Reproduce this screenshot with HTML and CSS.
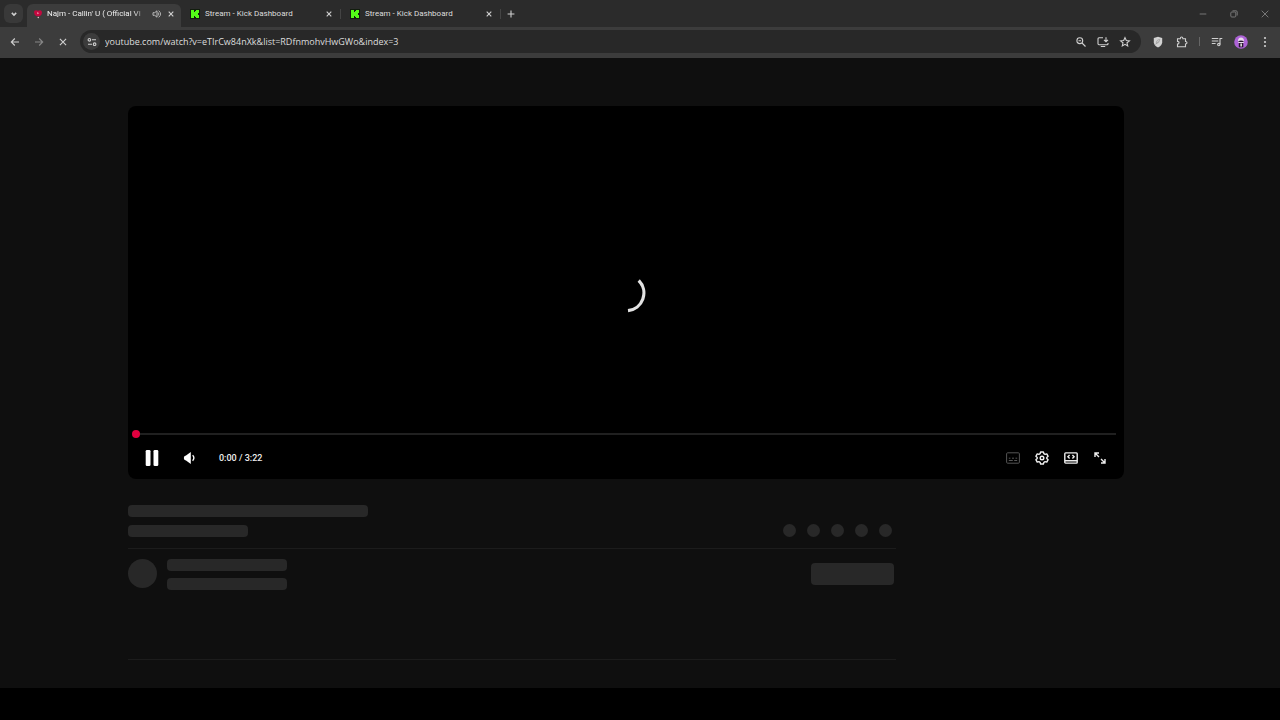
FILE: index.html
```html
<!DOCTYPE html>
<html lang="en">
<head>
<meta charset="utf-8">
<meta name="viewport" content="width=device-width, initial-scale=1">
<title>Najm - Callin' U ( Official Video )</title>
<link rel="stylesheet" href="styles.css">
</head>
<body>
<header class="browser">
  <div class="tabstrip">
    <button class="tab-search" aria-label="Search tabs"><svg width="8" height="8" viewBox="0 0 8 8" class="line bold"><path d="M1.8 2.9 4 5.1 6.2 2.9"/></svg></button>
    <div class="tab active">
      <svg class="favicon" width="10" height="10" viewBox="0 0 10 10"><path d="M1 3.2Q1 1.2 3 1.3L5 1.8 7.3 1.3Q9 1.5 9 3.5 9 6 6.5 7.2H3.7Q1 6 1 3.2Z" fill="#c4083f"/><path d="M4.2 3.1 6.2 4.2 4.2 5.3Z" fill="#e993ac"/><circle cx="5.3" cy="8.5" r=".8" fill="#d8c8cc"/></svg>
      <button class="tab-title">Najm - Callin' U ( Official Vi</button>
      <svg class="audio" width="10" height="10" viewBox="0 0 10 10"><path d="M1 3.7h1.7L5 1.8v6.4L2.7 6.3H1Z" fill="none" stroke="#bbb" stroke-width="1"/><path d="M6.3 3.5Q7.4 5 6.3 6.5M6.7 1.6Q10.5 5 6.7 8.4" fill="none" stroke="#bbb" stroke-width=".9"/></svg>
      <button class="close" aria-label="Close tab"><svg width="8" height="8" viewBox="0 0 8 8" class="line"><path d="m1.7 1.7 4.6 4.6m0-4.6L1.7 6.3"/></svg></button>
    </div>
    <div class="tab">
      <svg class="favicon" width="10" height="10" viewBox="0 0 10 10"><path d="M0 0h10v10H0z" fill="#111d0d"/><path d="M1 1h3v2h1V2h1V1h3v3H8v2h1v3H6V8H5V7H4v2H1Z" fill="#53fc18"/></svg>
      <button class="tab-title">Stream - Kick Dashboard</button>
      <button class="close" aria-label="Close tab"><svg width="8" height="8" viewBox="0 0 8 8" class="line"><path d="m1.7 1.7 4.6 4.6m0-4.6L1.7 6.3"/></svg></button>
    </div>
    <div class="tab">
      <svg class="favicon" width="10" height="10" viewBox="0 0 10 10"><path d="M0 0h10v10H0z" fill="#111d0d"/><path d="M1 1h3v2h1V2h1V1h3v3H8v2h1v3H6V8H5V7H4v2H1Z" fill="#53fc18"/></svg>
      <button class="tab-title">Stream - Kick Dashboard</button>
      <button class="close" aria-label="Close tab"><svg width="8" height="8" viewBox="0 0 8 8" class="line"><path d="m1.7 1.7 4.6 4.6m0-4.6L1.7 6.3"/></svg></button>
    </div>
    <button class="new-tab" aria-label="New tab"><svg width="10" height="10" viewBox="0 0 10 10" class="line"><path d="M5 1.6v6.8M1.6 5h6.8"/></svg></button>
    <div class="window-controls">
      <button aria-label="Minimize"><svg width="10" height="10" viewBox="0 0 10 10"><path d="M1.7 5h6.6"/></svg></button>
      <button aria-label="Restore"><svg width="10" height="10" viewBox="0 0 10 10"><rect x="1.8" y="3" width="5" height="5" rx="1"/><path d="M3.5 1.8H7Q8.2 1.8 8.2 3v3.5"/></svg></button>
      <button aria-label="Close window"><svg width="10" height="10" viewBox="0 0 10 10"><path d="m1.7 1.7 6.6 6.6m0-6.6L1.7 8.3"/></svg></button>
    </div>
  </div>
  <div class="toolbar">
    <button class="tool" aria-label="Back"><svg width="12" height="12" viewBox="0 0 12 12" class="line"><path d="M10 6H2.3M5.8 2.5 2.3 6l3.5 3.5"/></svg></button>
    <button class="tool dim" aria-label="Forward"><svg width="12" height="12" viewBox="0 0 12 12" class="line"><path d="M2 6h7.7M6.2 2.5 9.7 6 6.2 9.5"/></svg></button>
    <button class="tool" aria-label="Stop loading"><svg width="12" height="12" viewBox="0 0 12 12" class="line"><path d="m2.9 2.9 6.2 6.2m0-6.2L2.9 9.1"/></svg></button>
    <div class="address">
      <button class="site-info" aria-label="Site information"><svg width="10" height="10" viewBox="0 0 10 10" class="line"><circle cx="2.4" cy="2.8" r="1.3"/><path d="M5 2.8h4M1 7.2h4"/><circle cx="7.6" cy="7.2" r="1.3"/></svg></button>
      <input class="url" type="text" aria-label="Address" value="youtube.com/watch?v=eTIrCw84nXk&amp;list=RDfnmohvHwGWo&amp;index=3">
      <button class="addr-tool" aria-label="Zoom"><svg width="12" height="12" viewBox="0 0 12 12" class="line"><circle cx="4.8" cy="4.7" r="2.9"/><path d="m7 7 3.5 3.5M3.5 4.7h2.6"/></svg></button>
      <button class="addr-tool" aria-label="Install app"><svg width="12" height="12" viewBox="0 0 12 12" class="line"><path d="M6 1.8H2Q1 1.8 1 2.8v5Q1 8.7 2 8.7h8Q11 8.7 11 7.7V7M3.8 10.5h4.4M9 1.2v4.3M7 3.8l2 2 2-2"/></svg></button>
      <button class="addr-tool" aria-label="Bookmark"><svg width="12" height="12" viewBox="0 0 12 12" class="line"><path d="m6 1.6 1.3 2.9 3.1.3-2.4 2 .7 3.1L6 8.3 3.3 9.9 4 6.8l-2.4-2 3.1-.3Z"/></svg></button>
    </div>
    <div class="extensions">
      <button class="tool" aria-label="Shield"><svg width="12" height="12" viewBox="0 0 12 12"><path d="M6 .8 10.2 2v4.2Q10 9.5 6 11.5 2 9.5 1.8 6.2V2Z" fill="#d2d2d2"/><path d="M7.8 3.5Q4 3.7 4.3 7.7 7.3 7 7.8 3.5M3.5 8.5 6.3 5.4" fill="none" stroke="#999" stroke-width=".7"/></svg></button>
      <button class="tool" aria-label="Extensions"><svg width="12" height="12" viewBox="0 0 12 12" class="line"><path d="M1.5 2.8h2.8Q4.3 1 5.6 1t1.3 1.8h2.6v2.7q1.5 0 1.5 1.2T9.5 8v2.7h-8V8Q3 8 3 6.7T1.5 5.4Z"/></svg></button>
      <span class="divider"></span>
      <button class="tool" aria-label="Media controls"><svg width="12" height="12" viewBox="0 0 12 12" class="line"><path d="M.8 2.5h6.5M.8 5h6.5M.8 7.5h3.8M9 8.5v-6h2.3"/><circle cx="7.8" cy="8.6" r="1.2"/></svg></button>
      <button class="tool" aria-label="Profile"><svg width="14" height="14" viewBox="0 0 14 14"><circle cx="7" cy="7" r="6.8" fill="#ad63d6"/><path d="M4 6Q4 2.5 7 2.5T10 6L9.6 8H4.5Z" fill="#eadcef"/><path d="M4.5 6.1 7 5.5l2.7.6-.3.8H4.5ZM4.8 8h4.5v4.3H4.8Z" fill="#28162f"/><path d="M6.4 8.6h1.5v3H6.4Z" fill="#eee"/></svg></button>
      <button class="tool" aria-label="Menu"><svg width="12" height="12" viewBox="0 0 12 12" fill="#d0d0d0"><circle cx="6" cy="2" r="1.1"/><circle cx="6" cy="6" r="1.1"/><circle cx="6" cy="10" r="1.1"/></svg></button>
    </div>
  </div>
</header>
<main class="page">
  <section class="player" aria-label="Video player">
    <svg class="spinner" width="40" height="40" viewBox="0 0 40 40"><path d="M32.7 7.5A17.7 17.7 0 0 1 22 37.6" fill="none" stroke="#e2e2e2" stroke-width="3.2"/></svg>
    <input class="progress" type="range" min="0" max="202" value="0" aria-label="Seek">
    <div class="controls">
      <button class="control pause" aria-label="Pause"><svg width="14" height="18" viewBox="0 0 14 18" fill="#fff"><rect x=".7" y="1" width="4.8" height="16" rx="1.3"/><rect x="8.5" y="1" width="4.8" height="16" rx="1.3"/></svg></button>
      <button class="control volume" aria-label="Mute"><svg width="14" height="14" viewBox="0 0 14 14"><path d="M7.8 1v12L3 9.5Q.8 9.2.8 7T3 4.5Z" fill="#fff"/><path d="M9.6 4.3q2.6 2.7 0 5.4" fill="none" stroke="#fff" stroke-width="1.3"/></svg></button>
      <span class="time">0:00 / 3:22</span>
      <div class="right-controls">
        <button class="control" aria-label="Subtitles"><svg width="14" height="12" viewBox="0 0 14 12" fill="none" stroke="#555"><rect x=".6" y=".8" width="12.8" height="10.4" rx="1"/><path d="M2.8 6.2h1.6M6 6.2h2M9.5 6.2h1.7M2.8 8.5h4M8.2 8.5h3"/></svg></button>
        <button class="control" aria-label="Settings"><svg width="14" height="14" viewBox="0 0 14 14" fill="none" stroke="#eee" stroke-width="1.4" stroke-linejoin="round"><path d="m5.6 1-.5 1.7-1.2.7-1.7-.5L.9 5.3 2.2 6.5v1L.9 8.7l1.3 2.4 1.7-.5 1.2.7.5 1.7h2.8l.5-1.7 1.2-.7 1.7.5 1.3-2.4-1.3-1.2v-1l1.3-1.2-1.3-2.4-1.7.5-1.2-.7L8.4 1Z"/><circle cx="7" cy="7" r="1.8"/></svg></button>
        <button class="control" aria-label="Theater mode"><svg width="14" height="12" viewBox="0 0 14 12" fill="none" stroke="#eee" stroke-width="1.4"><rect x=".8" y=".9" width="12.4" height="10.2" rx=".8"/><path d="M1 8.7h12M5.6 3 3.9 4.7l1.7 1.7M8.4 3l1.7 1.7-1.7 1.7"/></svg></button>
        <button class="control" aria-label="Full screen"><svg width="12" height="12" viewBox="0 0 12 12" fill="none" stroke="#eee" stroke-width="1.4"><path d="M1 5V1h4M1 1l4 4M11 7v4H7M11 11 7 7"/></svg></button>
      </div>
    </div>
  </section>
  <section class="details" aria-label="Loading video details" aria-busy="true">
    <div class="bone title"></div>
    <div class="meta">
      <div class="bone short"></div>
      <div class="actions"><i class="dot"></i><i class="dot"></i><i class="dot"></i><i class="dot"></i><i class="dot"></i></div>
    </div>
    <div class="channel">
      <div class="avatar"></div>
      <div class="names"><div class="bone short"></div><div class="bone short"></div></div>
      <div class="subscribe"></div>
    </div>
  </section>
</main>
</body>
</html>
```
FILE: styles.css
```css
* { box-sizing: border-box; }
body {
  margin: 0;
  min-height: 100vh;
  display: flex;
  flex-direction: column;
  background: #000;
  color: #ddd;
  font-family: "Open Sans", "Noto Sans", sans-serif;
  font-size: 8px;
}
button {
  padding: 0;
  border: 0;
  background: none;
  color: inherit;
  font: inherit;
  display: grid;
  place-items: center;
}
svg { display: block; flex: none; }
.line { fill: none; stroke: #d0d0d0; stroke-width: 1.1; }
.bold { stroke-width: 1.5; }

/* Browser frame */
.browser { background: #3c3c3c; }
.tabstrip {
  display: flex;
  align-items: center;
  height: 27px;
  padding-left: 4px;
  background: #2b2b2b;
}
.tab-search {
  width: 19px;
  height: 19px;
  margin-right: 4px;
  border-radius: 6px;
  background: #393939;
}
.tab {
  display: flex;
  align-items: center;
  width: 160px;
  height: 19px;
  padding: 0 7px 0 9px;
  gap: 5px;
}
.tab:not(.active) { background: linear-gradient(#444, #444) right center / 1px 10px no-repeat; }
.tab.active {
  width: 154px;
  height: 23px;
  align-self: flex-end;
  padding: 0 5px 4px 6px;
  gap: 4px;
  border-radius: 6px 6px 0 0;
  background: #3c3c3c;
}
.tab-title {
  flex: 1;
  min-width: 0;
  overflow: hidden;
  white-space: nowrap;
  text-align: left;
  justify-items: start;
  font: 8px/12px Roboto, sans-serif;
}
.active .tab-title {
  color: #eee;
  mask-image: linear-gradient(to right, #000 85%, transparent);
}
.close { width: 10px; height: 12px; }
.new-tab { width: 20px; height: 20px; }
.window-controls { display: flex; margin-left: auto; }
.window-controls button { width: 31px; height: 27px; }
.window-controls svg { fill: none; stroke: #777; }
.toolbar {
  display: flex;
  align-items: center;
  height: 31px;
  padding: 0 3px 2px;
}
.tool { width: 24px; height: 24px; }
.dim { opacity: .5; }
.address {
  flex: 1;
  display: flex;
  align-items: center;
  height: 23px;
  margin: 0 5px;
  padding: 0 5px 0 3px;
  border-radius: 12px;
  background: #282828;
}
.site-info {
  width: 17px;
  height: 17px;
  border-radius: 50%;
  background: #3c3c3c;
}
.url {
  flex: 1;
  min-width: 0;
  margin: 0 0 0 5px;
  padding: 0;
  border: 0;
  outline: 0;
  background: none;
  color: #ddd;
  font: 9px/14px "Open Sans", "Noto Sans", sans-serif;
}
.addr-tool { width: 22px; height: 22px; }
.extensions { display: flex; align-items: center; }
.divider {
  width: 1px;
  height: 9px;
  margin: 0 5px;
  background: #666;
}

/* Watch page */
.page {
  flex: 1;
  margin-bottom: 32px;
  padding: 48px 156px 28px 128px;
  background: #0f0f0f;
}
.player {
  display: flex;
  flex-direction: column;
  justify-content: flex-end;
  position: relative;
  aspect-ratio: 996 / 373;
  padding: 0 8px 6px;
  border-radius: 8px;
  background: #000;
}
.spinner {
  position: absolute;
  inset: 0;
  margin: auto;
}
.progress {
  appearance: none;
  height: 8px;
  margin: 0;
  background: linear-gradient(#202020, #202020) center / 100% 2px no-repeat;
}
.progress::-webkit-slider-thumb {
  appearance: none;
  width: 8px;
  height: 8px;
  margin-left: -4px;
  border-radius: 50%;
  background: #e1003f;
}
.controls { display: flex; align-items: center; height: 30px; margin-top: 5px; }
.control { width: 29px; height: 28px; }
.pause { width: 32px; }
.volume { width: 43px; }
.time {
  margin-left: 8px;
  color: #eee;
  font: 500 9px/14px Roboto, sans-serif;
}
.right-controls { display: flex; margin: 0 2px 0 auto; }
.details { width: 100%; max-width: 768px; padding-top: 26px; }
.bone { height: 12px; border-radius: 4px; background: #282828; }
.title { width: 240px; }
.short { width: 120px; }
.meta {
  display: flex;
  align-items: center;
  justify-content: space-between;
  padding: 7px 4px 11px 0;
  border-bottom: 1px solid #1c1c1c;
}
.actions { display: flex; gap: 11px; }
.dot { width: 13px; height: 13px; border-radius: 50%; background: #282828; }
.channel {
  display: flex;
  align-items: flex-start;
  height: 111px;
  padding: 10px 2px 0 0;
  border-bottom: 1px solid #1c1c1c;
}
.avatar { width: 29px; height: 29px; border-radius: 50%; background: #282828; }
.names { display: grid; gap: 7px; margin-left: 10px; }
.subscribe {
  width: 83px;
  height: 22px;
  margin: 4px 0 0 auto;
  border-radius: 4px;
  background: #282828;
}
```
